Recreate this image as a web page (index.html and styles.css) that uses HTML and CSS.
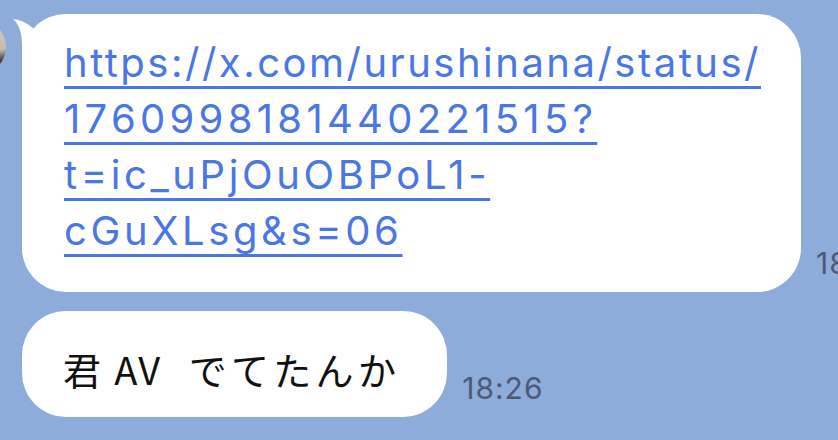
FILE: index.html
```html
<!DOCTYPE html>
<html lang="ja">
<head>
  <meta charset="UTF-8">
  <meta name="viewport" content="width=device-width, initial-scale=1.0">
  <title>Chat</title>
  <link rel="stylesheet" href="styles.css">
</head>
<body>

  <!-- Chat log -->
  <div class="chat">

    <div class="row">
      <div class="avatar"></div>
      <div class="bubble link-bubble">
        <svg class="tail" width="40" height="50" viewBox="0 0 40 50">
          <path d="M3 5 Q14 6 24 15 L24 50 L12 50 L12 32 C12 19 9 10 3 5 Z" fill="#fff"/>
        </svg>
        <a href="#">https://x.com/urushinana/status/<br><span class="digits">1760998181440221515?</span><br><span class="wide">t=ic_uPjOuOBPoL1-<br>cGuXLsg&amp;s=06</span></a>
      </div>
      <span class="time">18:26</span>
    </div>

    <div class="row">
      <div class="bubble text-bubble">君<span class="latin">AV</span>でてたんか</div>
      <span class="time">18:26</span>
    </div>

  </div>

</body>
</html>
```

FILE: styles.css
```css
/* Reset */
* {
  margin: 0;
  padding: 0;
  box-sizing: border-box;
}
html, body {
  overflow: hidden;
}
body {
  background-color: #8eacda;
  font-family: Inter, "Noto Sans CJK JP", sans-serif;
  width: 838px;
  height: 440px;
}

/* Chat log */
.chat {
  display: flex;
  flex-direction: column;
  gap: 19px;
  padding: 14px 0 0 22px;
}
.row {
  display: flex;
  align-items: flex-end;
}

/* Avatar (cut off at the left edge) */
.avatar {
  flex-shrink: 0;
  align-self: flex-start;
  width: 54px;
  height: 54px;
  margin: 6px 16px 0 -70px;
  border-radius: 50%;
  background: linear-gradient(170deg, #d8d2c6 0%, #c4bcae 60%, #3b3a38 78%, #6b6660 100%);
}

/* Bubbles */
.bubble {
  position: relative;
  flex-shrink: 0;
  background-color: #fff;
  border-radius: 44px;
}
.bubble .tail {
  position: absolute;
  left: -12px;
  top: 0;
}
.link-bubble {
  padding: 21px 40px 33px 42px;
}
.link-bubble a {
  position: relative;
  display: block;
  white-space: nowrap;
  font-size: 40px;
  line-height: 56px;
  letter-spacing: 2.5px;
  color: #4a76e6;
  text-decoration: underline;
  text-decoration-thickness: 3px;
  text-underline-offset: 9px;
}
.link-bubble .digits {
  letter-spacing: 4.3px;
}
.link-bubble .wide {
  letter-spacing: 3.6px;
}
.text-bubble {
  display: flex;
  align-items: center;
  height: 106px;
  padding: 8px 47px 0 41px;
  font-family: "Noto Sans CJK JP", sans-serif;
  font-size: 38px;
  letter-spacing: 4.3px;
  color: #111;
  white-space: nowrap;
}
.text-bubble .latin {
  letter-spacing: 1.5px;
  margin: 0 27px 0 9px;
}

/* Timestamps */
.time {
  flex-shrink: 0;
  margin: 0 0 14px 15px;
  font-size: 30px;
  letter-spacing: 1px;
  line-height: 1;
  color: #4c5a78;
  white-space: nowrap;
}
```
